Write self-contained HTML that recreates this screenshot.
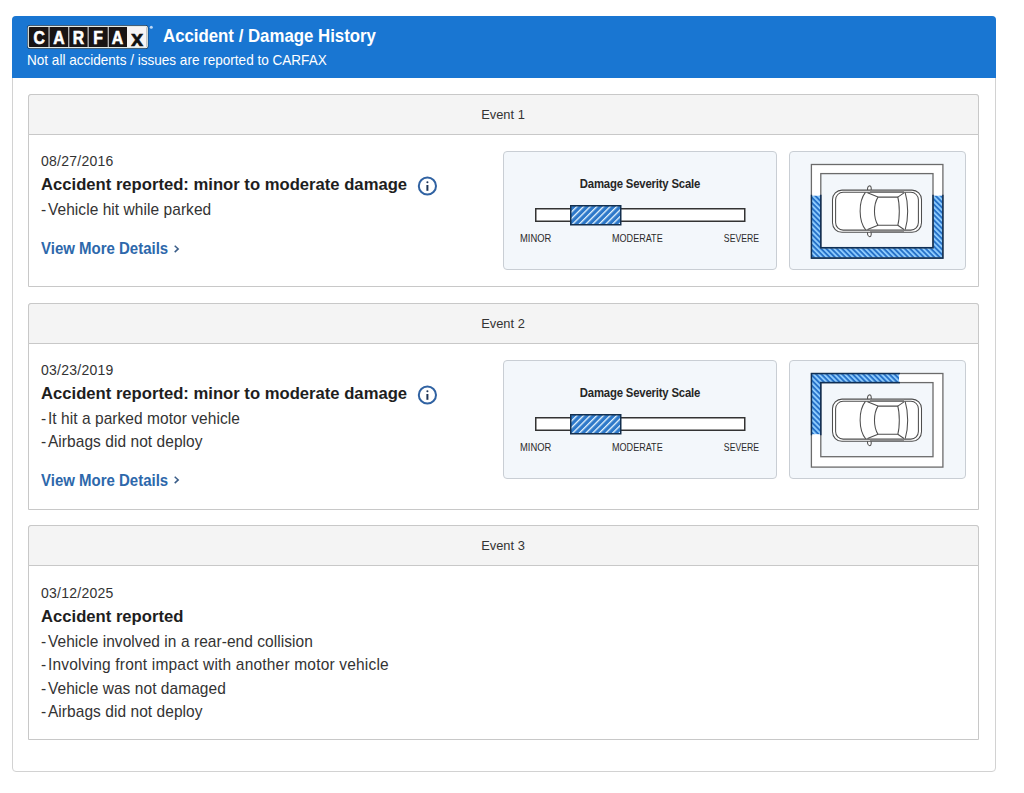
<!DOCTYPE html>
<html><head><meta charset="utf-8"><title>Accident / Damage History</title>
<style>
html,body{margin:0;padding:0;background:#fff;}
body{width:1024px;height:793px;position:relative;overflow:hidden;font-family:"Liberation Sans", sans-serif;}
.t{position:absolute;white-space:nowrap;}
.b{position:absolute;box-sizing:border-box;}
svg{position:absolute;}
</style></head><body>
<div class="b" style="left:12px;top:16px;width:984px;height:756px;border:1px solid #d2d2d2;border-radius:4px;"></div>
<div class="b" style="left:12px;top:16px;width:984px;height:62px;background:#1976d2;border-radius:4px 4px 0 0;"></div>
<svg style="left:27px;top:25px" width="128" height="25" viewBox="0 0 128 25"><rect x="0.3" y="0.3" width="121" height="23.4" rx="2.5" fill="#0d1a2a"/><rect x="1.3" y="1.3" width="119" height="21.4" rx="1.5" fill="#191414" stroke="#e4ebe6" stroke-width="1.2"/><text x="0" y="18.6" transform="translate(12.3,0) scale(0.9,1)" text-anchor="middle" font-family="Liberation Sans" font-weight="700" font-size="17.5" fill="#fff" stroke="#fff" stroke-width="0.6">C</text><rect x="21.5" y="2" width="1.1" height="20" fill="#d8d8d8"/><text x="0" y="18.6" transform="translate(31.9,0) scale(0.9,1)" text-anchor="middle" font-family="Liberation Sans" font-weight="700" font-size="17.5" fill="#fff" stroke="#fff" stroke-width="0.6">A</text><rect x="41.2" y="2" width="1.1" height="20" fill="#d8d8d8"/><text x="0" y="18.6" transform="translate(51.4,0) scale(0.9,1)" text-anchor="middle" font-family="Liberation Sans" font-weight="700" font-size="17.5" fill="#fff" stroke="#fff" stroke-width="0.6">R</text><rect x="60.6" y="2" width="1.1" height="20" fill="#d8d8d8"/><text x="0" y="18.6" transform="translate(71.1,0) scale(0.9,1)" text-anchor="middle" font-family="Liberation Sans" font-weight="700" font-size="17.5" fill="#fff" stroke="#fff" stroke-width="0.6">F</text><rect x="80.7" y="2" width="1.1" height="20" fill="#d8d8d8"/><text x="0" y="18.6" transform="translate(90.4,0) scale(0.9,1)" text-anchor="middle" font-family="Liberation Sans" font-weight="700" font-size="17.5" fill="#fff" stroke="#fff" stroke-width="0.6">A</text><rect x="100" y="1.9" width="19.7" height="20.2" fill="#f6f4f4"/><text x="110" y="21.4" text-anchor="middle" font-family="Liberation Sans" font-weight="700" font-size="22" fill="#111" stroke="#111" stroke-width="0.5">x</text><circle cx="124.3" cy="2.3" r="1.5" fill="#bcd8f7"/></svg>
<div class="t" style="left:162.5px;top:28.13px;font-size:17.8px;line-height:17.8px;font-weight:700;color:#fff;transform:scaleX(0.945);transform-origin:0 0;">Accident / Damage History</div>
<div class="t" style="left:27px;top:52.58px;font-size:14.2px;line-height:14.2px;font-weight:400;color:#fff;transform:scaleX(0.955);transform-origin:0 0;">Not all accidents / issues are reported to CARFAX</div>
<div class="b" style="left:28px;top:94px;width:951px;height:193px;border:1px solid #c8c8c8;border-radius:3px 3px 0 0;"></div>
<div class="b" style="left:28px;top:94px;width:951px;height:41px;background:#f4f4f4;border:1px solid #c8c8c8;border-radius:3px 3px 0 0;"></div>
<div class="t" style="left:203px;width:600px;text-align:center;top:108.40px;font-size:13.7px;line-height:13.7px;font-weight:400;color:#333;transform:scaleX(0.94);transform-origin:50% 0;">Event 1</div>
<div class="t" style="left:41px;top:153.55px;font-size:14px;line-height:14px;font-weight:400;color:#333;letter-spacing:0.25px;">08/27/2016</div>
<div class="t" style="left:41px;top:176.04px;font-size:17.2px;line-height:17.2px;font-weight:700;color:#1e1e1e;transform:scaleX(0.968);transform-origin:0 0;">Accident reported: minor to moderate damage</div>
<div class="t" style="left:41px;top:201.09px;font-size:16.2px;line-height:16.2px;font-weight:400;color:#333;letter-spacing:0.06px;transform:scaleX(0.957);transform-origin:0 0;"><span style="letter-spacing:-1.3px">- </span>Vehicle hit while parked</div>
<div class="t" style="left:41px;top:240.86px;font-size:16px;line-height:16px;font-weight:700;color:#2d68ab;transform:scaleX(0.937);transform-origin:0 0;">View More Details</div>
<svg style="left:172px;top:242.7px" width="10" height="12" viewBox="0 0 10 12"><polyline points="2.7,2.7 6.2,5.9 2.7,9.1" fill="none" stroke="#3a5d88" stroke-width="1.5"/></svg>
<svg style="left:416px;top:175px" width="22" height="22" viewBox="0 0 22 22"><circle cx="11.4" cy="11" r="8.6" fill="none" stroke="#3062a2" stroke-width="2.0"/><rect x="10.4" y="10" width="2" height="5.8" fill="#1f3556"/><circle cx="11.4" cy="7.3" r="1.05" fill="#1f3556"/></svg>
<div class="b" style="left:503px;top:151px;width:274px;height:119px;border:1px solid #c9ced4;border-radius:4px;background:#f3f7fb;"></div>
<div class="t" style="left:340px;width:600px;text-align:center;top:178.13px;font-size:12.6px;line-height:12.6px;font-weight:700;color:#262626;letter-spacing:-0.2px;transform:scaleX(0.9);transform-origin:50% 0;">Damage Severity Scale</div>
<svg style="left:533px;top:203px" width="216" height="24" viewBox="0 0 216 24"><defs><pattern id="hs1" patternUnits="userSpaceOnUse" width="4.7" height="4.7" patternTransform="rotate(45)"><rect width="4.7" height="4.7" fill="#2d78c9"/><rect width="1.3" height="4.7" fill="#eaf8ff"/></pattern></defs><rect x="2.75" y="5.75" width="209" height="12.5" fill="#fff" stroke="#333" stroke-width="1.5"/><rect x="37.75" y="2.75" width="50" height="19" fill="url(#hs1)" stroke="#14304f" stroke-width="1.5"/></svg>
<div class="t" style="left:519.5px;top:233.67px;font-size:10.2px;line-height:10.2px;font-weight:400;color:#2b2b2b;transform:scaleX(0.92);transform-origin:0 0;">MINOR</div>
<div class="t" style="left:612.3px;top:233.67px;font-size:10.2px;line-height:10.2px;font-weight:400;color:#2b2b2b;transform:scaleX(0.89);transform-origin:0 0;">MODERATE</div>
<div class="t" style="left:159px;width:600px;text-align:right;top:233.67px;font-size:10.2px;line-height:10.2px;font-weight:400;color:#2b2b2b;transform:scaleX(0.85);transform-origin:100% 0;">SEVERE</div>
<div class="b" style="left:789px;top:151px;width:177px;height:119px;border:1px solid #c9ced4;border-radius:4px;background:#f3f7fb;"></div>
<svg style="left:809px;top:161.5px" width="136" height="98" viewBox="-2 -2 136 98"><defs><pattern id="hc1" patternUnits="userSpaceOnUse" width="3.7" height="3.7" patternTransform="rotate(-45)"><rect width="3.7" height="3.7" fill="#2772c8"/><rect width="1.75" height="3.7" fill="#92cfff"/></pattern></defs><rect x="0.4" y="0.5" width="131.5" height="93.6" fill="#fff"/><rect x="0.4" y="31.7" width="131.5" height="62.4" fill="url(#hc1)"/><rect x="9.8" y="9.6" width="112.2" height="74.1" fill="#f3f7fb"/><rect x="0.4" y="0.5" width="131.5" height="93.6" fill="none" stroke="#6b6b6b" stroke-width="1.3"/><rect x="9.8" y="9.6" width="112.2" height="74.1" fill="none" stroke="#6b6b6b" stroke-width="1.3"/><clipPath id="hc1c"><rect x="-0.6" y="30.7" width="133.5" height="64.4"/></clipPath><g clip-path="url(#hc1c)"><rect x="0.4" y="0.5" width="131.5" height="93.6" fill="none" stroke="#0f2f55" stroke-width="1.5"/><rect x="9.8" y="9.6" width="112.2" height="74.1" fill="none" stroke="#0f2f55" stroke-width="1.5"/></g><g transform="translate(21,25.5)"><g fill="none" stroke="#4e4e4e" stroke-width="1.05">
<path d="M36.2 3.5 C35 0 35.2 -3.6 37.8 -3.8 C39.5 -3.6 39.6 -0.5 38.6 3.5 Z" fill="#fff"/>
<path d="M36.2 39.9 C35 43.4 35.2 47 37.8 47.2 C39.5 47 39.6 43.9 38.6 39.9 Z" fill="#fff"/>
<rect x="0.5" y="0.6" width="89" height="42.2" rx="9.5" fill="#fff"/>
<rect x="3.6" y="2.8" width="82.8" height="37.8" rx="7.5"/>
<path d="M38 1.7 H72" stroke="#8a8a8a" stroke-width="1.4"/>
<path d="M38 41.7 H72" stroke="#8a8a8a" stroke-width="1.4"/>
<path d="M33.4 2.9 C26.3 12 26.3 31.4 33.8 40.5"/>
<path d="M35.5 3.3 L46 7.6 M35.5 40.1 L46 35.8"/>
<path d="M46 7.6 C41.3 15 41.3 28.4 46 35.8"/>
<path d="M46 7.6 H65.8 C67.8 15 67.8 28.4 65.8 35.8 H46"/>
<path d="M65.8 7.6 L72 3.4 M65.8 35.8 L72 40"/>
<path d="M73.2 3.2 C76.5 14 76.5 29.4 73.2 40.2"/>
</g></g></svg>
<div class="b" style="left:28px;top:303px;width:951px;height:207px;border:1px solid #c8c8c8;border-radius:3px 3px 0 0;"></div>
<div class="b" style="left:28px;top:303px;width:951px;height:41px;background:#f4f4f4;border:1px solid #c8c8c8;border-radius:3px 3px 0 0;"></div>
<div class="t" style="left:203px;width:600px;text-align:center;top:317.40px;font-size:13.7px;line-height:13.7px;font-weight:400;color:#333;transform:scaleX(0.94);transform-origin:50% 0;">Event 2</div>
<div class="t" style="left:41px;top:362.55px;font-size:14px;line-height:14px;font-weight:400;color:#333;letter-spacing:0.25px;">03/23/2019</div>
<div class="t" style="left:41px;top:385.04px;font-size:17.2px;line-height:17.2px;font-weight:700;color:#1e1e1e;transform:scaleX(0.968);transform-origin:0 0;">Accident reported: minor to moderate damage</div>
<div class="t" style="left:41px;top:410.09px;font-size:16.2px;line-height:16.2px;font-weight:400;color:#333;letter-spacing:0.06px;transform:scaleX(0.957);transform-origin:0 0;"><span style="letter-spacing:-1.3px">- </span>It hit a parked motor vehicle</div>
<div class="t" style="left:41px;top:433.49px;font-size:16.2px;line-height:16.2px;font-weight:400;color:#333;letter-spacing:0.06px;transform:scaleX(0.957);transform-origin:0 0;"><span style="letter-spacing:-1.3px">- </span>Airbags did not deploy</div>
<div class="t" style="left:41px;top:472.56px;font-size:16px;line-height:16px;font-weight:700;color:#2d68ab;transform:scaleX(0.937);transform-origin:0 0;">View More Details</div>
<svg style="left:172px;top:474.4px" width="10" height="12" viewBox="0 0 10 12"><polyline points="2.7,2.7 6.2,5.9 2.7,9.1" fill="none" stroke="#3a5d88" stroke-width="1.5"/></svg>
<svg style="left:416px;top:384px" width="22" height="22" viewBox="0 0 22 22"><circle cx="11.4" cy="11" r="8.6" fill="none" stroke="#3062a2" stroke-width="2.0"/><rect x="10.4" y="10" width="2" height="5.8" fill="#1f3556"/><circle cx="11.4" cy="7.3" r="1.05" fill="#1f3556"/></svg>
<div class="b" style="left:503px;top:360px;width:274px;height:119px;border:1px solid #c9ced4;border-radius:4px;background:#f3f7fb;"></div>
<div class="t" style="left:340px;width:600px;text-align:center;top:387.13px;font-size:12.6px;line-height:12.6px;font-weight:700;color:#262626;letter-spacing:-0.2px;transform:scaleX(0.9);transform-origin:50% 0;">Damage Severity Scale</div>
<svg style="left:533px;top:412px" width="216" height="24" viewBox="0 0 216 24"><defs><pattern id="hs2" patternUnits="userSpaceOnUse" width="4.7" height="4.7" patternTransform="rotate(45)"><rect width="4.7" height="4.7" fill="#2d78c9"/><rect width="1.3" height="4.7" fill="#eaf8ff"/></pattern></defs><rect x="2.75" y="5.75" width="209" height="12.5" fill="#fff" stroke="#333" stroke-width="1.5"/><rect x="37.75" y="2.75" width="50" height="19" fill="url(#hs2)" stroke="#14304f" stroke-width="1.5"/></svg>
<div class="t" style="left:519.5px;top:442.67px;font-size:10.2px;line-height:10.2px;font-weight:400;color:#2b2b2b;transform:scaleX(0.92);transform-origin:0 0;">MINOR</div>
<div class="t" style="left:612.3px;top:442.67px;font-size:10.2px;line-height:10.2px;font-weight:400;color:#2b2b2b;transform:scaleX(0.89);transform-origin:0 0;">MODERATE</div>
<div class="t" style="left:159px;width:600px;text-align:right;top:442.67px;font-size:10.2px;line-height:10.2px;font-weight:400;color:#2b2b2b;transform:scaleX(0.85);transform-origin:100% 0;">SEVERE</div>
<div class="b" style="left:789px;top:360px;width:177px;height:119px;border:1px solid #c9ced4;border-radius:4px;background:#f3f7fb;"></div>
<svg style="left:809px;top:370.5px" width="136" height="98" viewBox="-2 -2 136 98"><defs><pattern id="hc2" patternUnits="userSpaceOnUse" width="3.7" height="3.7" patternTransform="rotate(-45)"><rect width="3.7" height="3.7" fill="#2772c8"/><rect width="1.75" height="3.7" fill="#92cfff"/></pattern></defs><rect x="0.4" y="0.5" width="131.5" height="93.6" fill="#fff"/><rect x="0.4" y="0.5" width="87.6" height="10" fill="url(#hc2)"/><rect x="0.4" y="0.5" width="10" height="60.7" fill="url(#hc2)"/><rect x="9.8" y="9.6" width="112.2" height="74.1" fill="#f3f7fb"/><rect x="0.4" y="0.5" width="131.5" height="93.6" fill="none" stroke="#6b6b6b" stroke-width="1.3"/><rect x="9.8" y="9.6" width="112.2" height="74.1" fill="none" stroke="#6b6b6b" stroke-width="1.3"/><clipPath id="hc2c"><rect x="-0.6" y="-0.5" width="89.6" height="12"/><rect x="-0.6" y="-0.5" width="12" height="62.7"/></clipPath><g clip-path="url(#hc2c)"><rect x="0.4" y="0.5" width="131.5" height="93.6" fill="none" stroke="#0f2f55" stroke-width="1.5"/><rect x="9.8" y="9.6" width="112.2" height="74.1" fill="none" stroke="#0f2f55" stroke-width="1.5"/></g><g transform="translate(21,25.5)"><g fill="none" stroke="#4e4e4e" stroke-width="1.05">
<path d="M36.2 3.5 C35 0 35.2 -3.6 37.8 -3.8 C39.5 -3.6 39.6 -0.5 38.6 3.5 Z" fill="#fff"/>
<path d="M36.2 39.9 C35 43.4 35.2 47 37.8 47.2 C39.5 47 39.6 43.9 38.6 39.9 Z" fill="#fff"/>
<rect x="0.5" y="0.6" width="89" height="42.2" rx="9.5" fill="#fff"/>
<rect x="3.6" y="2.8" width="82.8" height="37.8" rx="7.5"/>
<path d="M38 1.7 H72" stroke="#8a8a8a" stroke-width="1.4"/>
<path d="M38 41.7 H72" stroke="#8a8a8a" stroke-width="1.4"/>
<path d="M33.4 2.9 C26.3 12 26.3 31.4 33.8 40.5"/>
<path d="M35.5 3.3 L46 7.6 M35.5 40.1 L46 35.8"/>
<path d="M46 7.6 C41.3 15 41.3 28.4 46 35.8"/>
<path d="M46 7.6 H65.8 C67.8 15 67.8 28.4 65.8 35.8 H46"/>
<path d="M65.8 7.6 L72 3.4 M65.8 35.8 L72 40"/>
<path d="M73.2 3.2 C76.5 14 76.5 29.4 73.2 40.2"/>
</g></g></svg>
<div class="b" style="left:28px;top:525px;width:951px;height:215px;border:1px solid #c8c8c8;border-radius:3px 3px 0 0;"></div>
<div class="b" style="left:28px;top:525px;width:951px;height:41px;background:#f4f4f4;border:1px solid #c8c8c8;border-radius:3px 3px 0 0;"></div>
<div class="t" style="left:203px;width:600px;text-align:center;top:539.40px;font-size:13.7px;line-height:13.7px;font-weight:400;color:#333;transform:scaleX(0.94);transform-origin:50% 0;">Event 3</div>
<div class="t" style="left:41px;top:585.55px;font-size:14px;line-height:14px;font-weight:400;color:#333;letter-spacing:0.25px;">03/12/2025</div>
<div class="t" style="left:41px;top:608.04px;font-size:17.2px;line-height:17.2px;font-weight:700;color:#1e1e1e;transform:scaleX(0.968);transform-origin:0 0;">Accident reported</div>
<div class="t" style="left:41px;top:633.09px;font-size:16.2px;line-height:16.2px;font-weight:400;color:#333;letter-spacing:0.06px;transform:scaleX(0.957);transform-origin:0 0;"><span style="letter-spacing:-1.3px">- </span>Vehicle involved in a rear-end collision</div>
<div class="t" style="left:41px;top:656.49px;font-size:16.2px;line-height:16.2px;font-weight:400;color:#333;letter-spacing:0.2px;transform:scaleX(0.957);transform-origin:0 0;"><span style="letter-spacing:-1.3px">- </span>Involving front impact with another motor vehicle</div>
<div class="t" style="left:41px;top:679.89px;font-size:16.2px;line-height:16.2px;font-weight:400;color:#333;letter-spacing:0.06px;transform:scaleX(0.957);transform-origin:0 0;"><span style="letter-spacing:-1.3px">- </span>Vehicle was not damaged</div>
<div class="t" style="left:41px;top:703.29px;font-size:16.2px;line-height:16.2px;font-weight:400;color:#333;letter-spacing:0.06px;transform:scaleX(0.957);transform-origin:0 0;"><span style="letter-spacing:-1.3px">- </span>Airbags did not deploy</div>
</body></html>
